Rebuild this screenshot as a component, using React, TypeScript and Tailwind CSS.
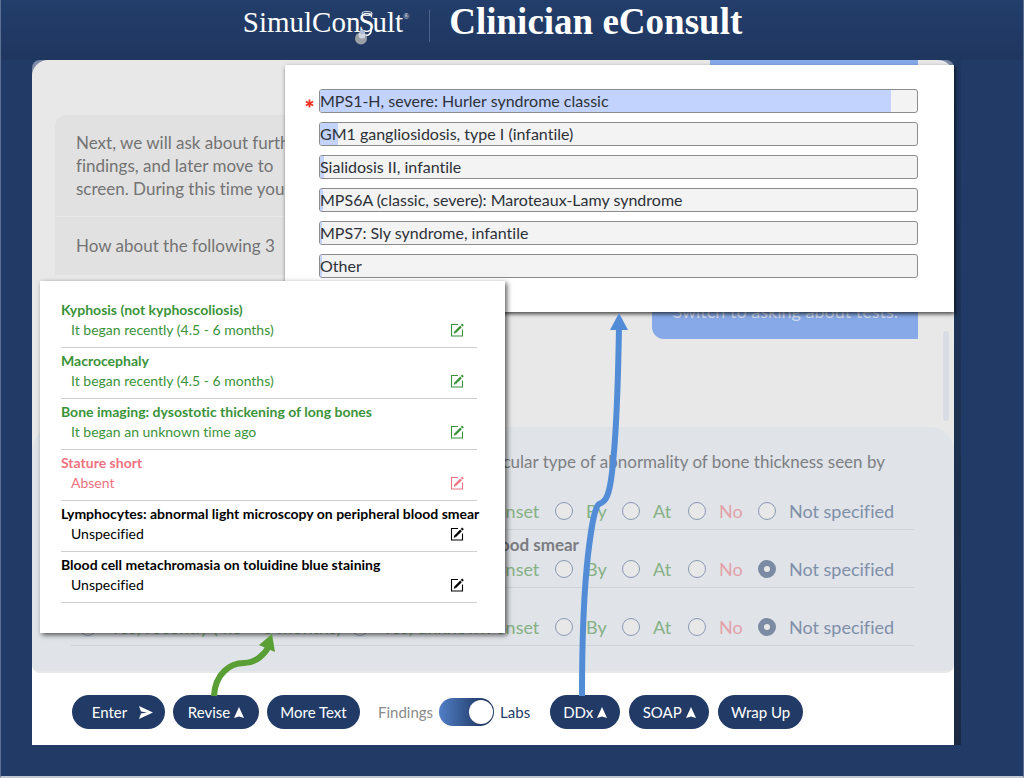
const diagnoses = [
    { name: 'MPS1-H, severe: Hurler syndrome classic', share: 95.6, top: true },
    { name: 'GM1 gangliosidosis, type I (infantile)', share: 3 },
    { name: 'Sialidosis II, infantile', share: 0.7 },
    { name: 'MPS6A (classic, severe): Maroteaux-Lamy syndrome', share: 0.5 },
    { name: 'MPS7: Sly syndrome, infantile', share: 0.4 },
    { name: 'Other', share: 0.3 },
];

const findings = [
    { name: 'Kyphosis (not kyphoscoliosis)', status: 'It began recently (4.5 - 6 months)', color: 'text-[#3a9339]' },
    { name: 'Macrocephaly', status: 'It began recently (4.5 - 6 months)', color: 'text-[#3a9339]' },
    { name: 'Bone imaging: dysostotic thickening of long bones', status: 'It began an unknown time ago', color: 'text-[#3a9339]' },
    { name: 'Stature short', status: 'Absent', color: 'text-[#f07282]' },
    { name: 'Lymphocytes: abnormal light microscopy on peripheral blood smear', status: 'Unspecified', color: 'text-black' },
    { name: 'Blood cell metachromasia on toluidine blue staining', status: 'Unspecified', color: 'text-black' },
];

const questions = [
    { id: 'thickness', title: '', answered: false },
    { id: 'lymphocytes', title: 'Lymphocytes: abnormal light microscopy on peripheral blood smear', answered: true },
    { id: 'metachromasia', title: '', answered: true },
];

const options = [
    { label: 'Yes, recently (4.5 – 6 months)', color: 'text-[#85b184]' },
    { label: 'Yes, unknown onset', color: 'text-[#85b184]' },
    { label: 'By', color: 'text-[#85b184]' },
    { label: 'At', color: 'text-[#85b184]' },
    { label: 'No', color: 'text-[#e3a1a9]' },
    { label: 'Not specified', color: 'text-[#7f8fa8]' },
];

const pill = 'flex h-[34px] items-center justify-center rounded-full bg-[#213b66] text-[15px] text-white';

const UpMark = () => (
    <svg viewBox="0 0 10 11" className="h-[11px] w-[10px]" fill="currentColor" aria-hidden="true">
        <path d="M5 0 L10 11 L5 9.4 L0 11 Z" />
    </svg>
);

const EditIcon = () => (
    <svg viewBox="0 0 14 14" className="size-[14px]" fill="none" stroke="currentColor" aria-hidden="true">
        <path d="M8 1.5 H1.500 V13 H12.500 V6.500" strokeWidth="1.1" />
        <path d="M5.200 9.200 L11 3.400" strokeWidth="2.300" />
        <path d="M11.600 2.800 L13 1.400" strokeWidth="2.300" />
        <path d="M3.800 10.700 L4.300 8.300 L6.100 10.100 Z" fill="currentColor" stroke="none" />
    </svg>
);

const Logo = () => (
    <a href="#" className="relative flex items-baseline font-['Liberation_Serif',serif] text-[29px] leading-[44px] text-white">
        <span>SimulCon</span>
        <span className="-mx-[2px] uppercase">s</span>
        <span>ult</span>
        <span className="self-start text-[8px] leading-[34px]">®</span>
        {/* Stethoscope hanging from the middle s */}
        <svg viewBox="0 0 22 36" className="absolute top-[10px] left-[109px] h-[36px] w-[22px]" fill="none" aria-hidden="true">
            <ellipse cx="15" cy="3.500" rx="5" ry="2" stroke="#dfe5ee" strokeWidth="1.1" />
            <path d="M19 18 C20 25 15 27 9 24" stroke="#fff" strokeWidth="1.6" />
            <circle cx="9" cy="28.500" r="6" fill="#9a9fa8" />
            <circle cx="10" cy="25" r="3.500" fill="#cfd6e0" />
            <circle cx="10.500" cy="22" r="2.500" fill="#aebbd0" />
        </svg>
    </a>
);

const Chat = () => (
    <section className="relative flex flex-col pr-9 pl-[23px] pb-[88px] text-[17px] leading-[23px]">
        <div className="h-[5px] w-[208px] self-end bg-[#88a9e8]"></div>
        <div className="mt-[50px] w-[420px] overflow-hidden rounded-t-xl bg-[#e1e1e1] whitespace-nowrap text-[#737373]">
            <p className="border-b border-[#e8e8e8] px-[21px] py-4">
                Next, we will ask about further
                <br />
                findings, and later move to
                <br />
                screen. During this time you
            </p>
            <p className="px-[21px] pt-[17px] pb-[18px]">How about the following 3</p>
        </div>
        <div className="mt-[9px] self-end rounded-l-xl bg-[#88a9e8] px-5 py-4 text-[18px] text-[#d3dcec]">Switch to asking about tests.</div>
        <div className="absolute right-[5px] bottom-[6px] h-[90px] w-[6px] rounded-full bg-[#d9dce4]"></div>
    </section>
);

const QuestionForm = () => (
    <form className="rounded-t-3xl rounded-b-lg border-b-2 border-[#e8e8e8] bg-[#e0e3e8] pt-6 pr-10 pb-[25px] pl-[39px] text-[17px]">
        <p className="pr-[29px] text-right leading-[21px] text-[#7d7f83]">particular type of abnormality of bone thickness seen by</p>
        {questions.map((q) => (
            <fieldset key={q.id} aria-label={q.id} className="border-b border-[#cfd2d8] pt-[3px] pb-[6px]">
                <p className="h-6 leading-6 font-bold whitespace-nowrap text-[#7b7d81]">{q.title}</p>
                <div className="grid grid-cols-[272px_204px_67px_66px_70px_1fr] pl-2 text-[18px]">
                    {options.map((o, i) => (
                        <label key={o.label} className={`flex h-6 items-center gap-[13px] whitespace-nowrap ${o.color}`}>
                            <input
                                type="radio"
                                name={q.id}
                                defaultChecked={q.answered && i === options.length - 1}
                                className="size-[18px] shrink-0 appearance-none rounded-full border border-[#8b99b3] bg-[#e8e8e8] checked:border-[6px] checked:border-[#7b8ba3]"
                            />
                            {o.label}
                        </label>
                    ))}
                </div>
            </fieldset>
        ))}
    </form>
);

const Toolbar = () => (
    <nav className="flex h-[72px] items-center bg-white pt-[6px] pl-10 text-[15px]">
        <div className="flex gap-2">
            <button className={`${pill} w-[93px] gap-3 pl-2`}>
                Enter
                <svg viewBox="0 0 14 13" className="h-[13px] w-[14px]" fill="currentColor" aria-hidden="true">
                    <path d="M0 0 L14 6.500 L0 13 L2 7.600 L8 6.500 L2 5.400 Z" />
                </svg>
            </button>
            <button className={`${pill} w-[86px] gap-1`}>
                Revise <UpMark />
            </button>
            <button className={`${pill} w-[93px]`}>More Text</button>
        </div>
        <label className="ml-[18px] flex items-center gap-[6px]">
            <span className="text-[#8a8a8a]">Findings</span>
            <input
                type="checkbox"
                role="switch"
                defaultChecked
                className="relative h-7 w-[55px] appearance-none rounded-full bg-linear-to-r from-[#527fc8] to-[#213b66] to-80% before:absolute before:top-[2px] before:right-[1px] before:size-6 before:rounded-full before:bg-white"
            />
            <span className="text-[#213b66]">Labs</span>
        </label>
        <div className="ml-5 flex gap-[9px]">
            <button className={`${pill} w-[70px] gap-1`}>
                DDx <UpMark />
            </button>
            <button className={`${pill} w-[80px] gap-1`}>
                SOAP <UpMark />
            </button>
            <button className={`${pill} w-[85px]`}>Wrap Up</button>
        </div>
    </nav>
);

const DiagnosisPopup = () => (
    <div className="absolute top-[5px] right-0 left-[253px] bg-white pt-6 pr-9 pb-[34px] pl-5 shadow-[1px_2px_4px_rgba(0,0,0,0.7)]">
        <ul className="flex flex-col gap-[9px]">
            {diagnoses.map((d) => (
                <li key={d.name} className="flex items-center">
                    <span className="w-[14px] text-[#ee3524]">
                        {d.top && (
                            <svg viewBox="0 0 10 10" className="mt-1 size-[9px]" stroke="currentColor" strokeWidth="2" aria-hidden="true">
                                <path d="M5 0.500 V9.500 M1 2.700 L9 7.300 M9 2.700 L1 7.300" />
                            </svg>
                        )}
                    </span>
                    <div className="relative h-6 flex-1 overflow-hidden rounded-[3px] border border-[#8c8c8c] bg-[#f3f3f3]">
                        <div className="absolute inset-y-0 left-0 bg-[#c2d3fd]" style={{ width: `${d.share}%` }}></div>
                        <p className="relative text-[16px] leading-[22px] text-[#2d3138]">{d.name}</p>
                    </div>
                </li>
            ))}
        </ul>
    </div>
);

const FindingsPopup = () => (
    <div className="absolute top-[221px] left-2 w-[465px] bg-white pt-4 pr-7 pb-[30px] pl-[21px] shadow-[2px_2px_5px_rgba(0,0,0,0.65)]">
        <ul>
            {findings.map((f) => (
                <li key={f.name} className={`border-b border-[#cfcfcf] pt-[3px] pb-[7px] text-[14px] leading-5 ${f.color}`}>
                    <p className="font-bold whitespace-nowrap">{f.name}</p>
                    <div className="flex items-center justify-between pr-[13px] pl-[10px]">
                        <span>{f.status}</span>
                        <button aria-label="Edit">
                            <EditIcon />
                        </button>
                    </div>
                </li>
            ))}
        </ul>
    </div>
);

// Callout arrows from the toolbar buttons to their popups
const Arrows = () => (
    <svg viewBox="32 60 922 684" className="pointer-events-none absolute top-0 left-0 h-[684px] w-[922px]" fill="none" aria-hidden="true">
        <path d="M582 696 C582 640 584 590 588 555 C591 530 594 508 599 504 C604 502 608 500 611 480 C616 445 618 390 619 326" stroke="#528cd6" strokeWidth="6" />
        <path d="M619 313 L628 330 L610 330 Z" fill="#528cd6" />
        <path d="M214 696 C215 674 230 663 244 663 C256 663 265 654 269 646" stroke="#5a9e36" strokeWidth="6" />
        <path d="M272 634 L275 652 L259 645 Z" fill="#5a9e36" />
    </svg>
);

export default function App() {
    return (
        <div className="flex min-h-screen flex-col border-x border-b-2 border-[#5d7192] border-b-[#c3c8d2] bg-[#213b66] font-[Lato,sans-serif] [font-variant-ligatures:none]">
            <header className="flex h-[60px] items-start justify-center bg-linear-to-b from-[#233e6b] to-[#1f365f] pr-[39px]">
                <Logo />
                <div className="mt-[10px] mr-[19px] ml-5 h-8 w-px bg-[#4b6188]"></div>
                <h1 className="font-['Liberation_Serif',serif] text-[37px] leading-[44px] font-bold text-white">Clinician eConsult</h1>
            </header>
            <div className="mr-[62px] ml-[31px] flex">
                <main className="relative min-w-0 flex-1 rounded-t-lg bg-[#7b8aa6]">
                    <div className="rounded-t-2xl bg-[#e8e8e8]">
                        <Chat />
                        <div className="bg-linear-to-b from-[#e8e8e8] from-50% to-white to-50%">
                            <QuestionForm />
                        </div>
                    </div>
                    <Toolbar />
                    <DiagnosisPopup />
                    <FindingsPopup />
                    <Arrows />
                </main>
                <div className="w-[7px] bg-linear-to-b from-[#1f3861] to-[#1a2a42]"></div>
            </div>
        </div>
    );
}
